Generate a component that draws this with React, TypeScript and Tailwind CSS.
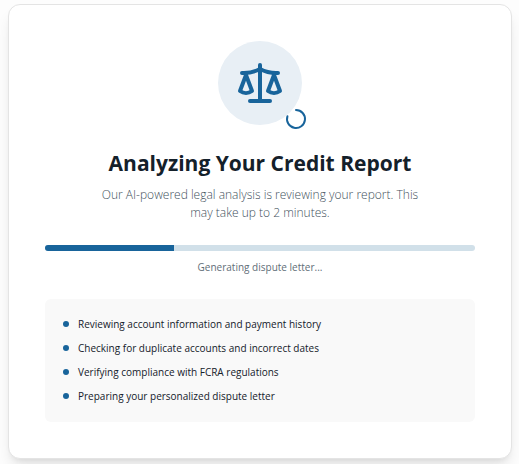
import { LoaderCircle, Scale } from "lucide-react";

const steps = [
  "Reviewing account information and payment history",
  "Checking for duplicate accounts and incorrect dates",
  "Verifying compliance with FCRA regulations",
  "Preparing your personalized dispute letter",
];

const progress = 30;

export default function App() {
  return (
    <main className="min-h-screen bg-[#fdfdfd] pt-1 pr-[7px] pb-1 pl-2 font-['Open_Sans','Noto_Sans',sans-serif]">
      <section className="flex flex-col items-center rounded-xl border border-[#e4e4e4] bg-white p-9 shadow-lg">
        <div className="relative rounded-full bg-[#e8eff5] p-[18px]">
          <Scale size={48} strokeWidth={2} color="#18649b" />
          <LoaderCircle
            size={24}
            strokeWidth={2}
            color="#18649b"
            className="absolute -right-1.5 -bottom-1.5 -rotate-90"
          />
        </div>

        <h1 className="mt-6 text-center text-[21px] leading-7 font-bold text-[#14202a]">
          Analyzing Your Credit Report
        </h1>
        <p className="mt-[9px] max-w-[330px] text-center text-xs leading-[18px] font-light text-[#3f515c]">
          Our AI-powered legal analysis is reviewing your report. This may take up to 2 minutes.
        </p>

        <div
          role="progressbar"
          aria-label="Analysis progress"
          aria-valuenow={progress}
          className="mt-[23px] h-1.5 w-full overflow-hidden rounded-full bg-[#d1e0e9]"
        >
          <div className="h-full bg-[#18649b]" style={{ width: `${progress}%` }} />
        </div>
        <p className="mt-2 text-[10px] leading-4 font-medium text-[#5f6e78]">
          Generating dispute letter...
        </p>

        <ul className="mt-6 flex w-full flex-col gap-2 rounded-md bg-[#f9f9f9] px-[18px] pt-[17px] pb-[18px]">
          {steps.map((step) => (
            <li
              key={step}
              className="flex items-center gap-[9px] text-[10px] leading-4 text-[#14202a]"
            >
              <span className="size-1.5 shrink-0 rounded-full bg-[#18649b]" />
              {step}
            </li>
          ))}
        </ul>
      </section>
    </main>
  );
}
